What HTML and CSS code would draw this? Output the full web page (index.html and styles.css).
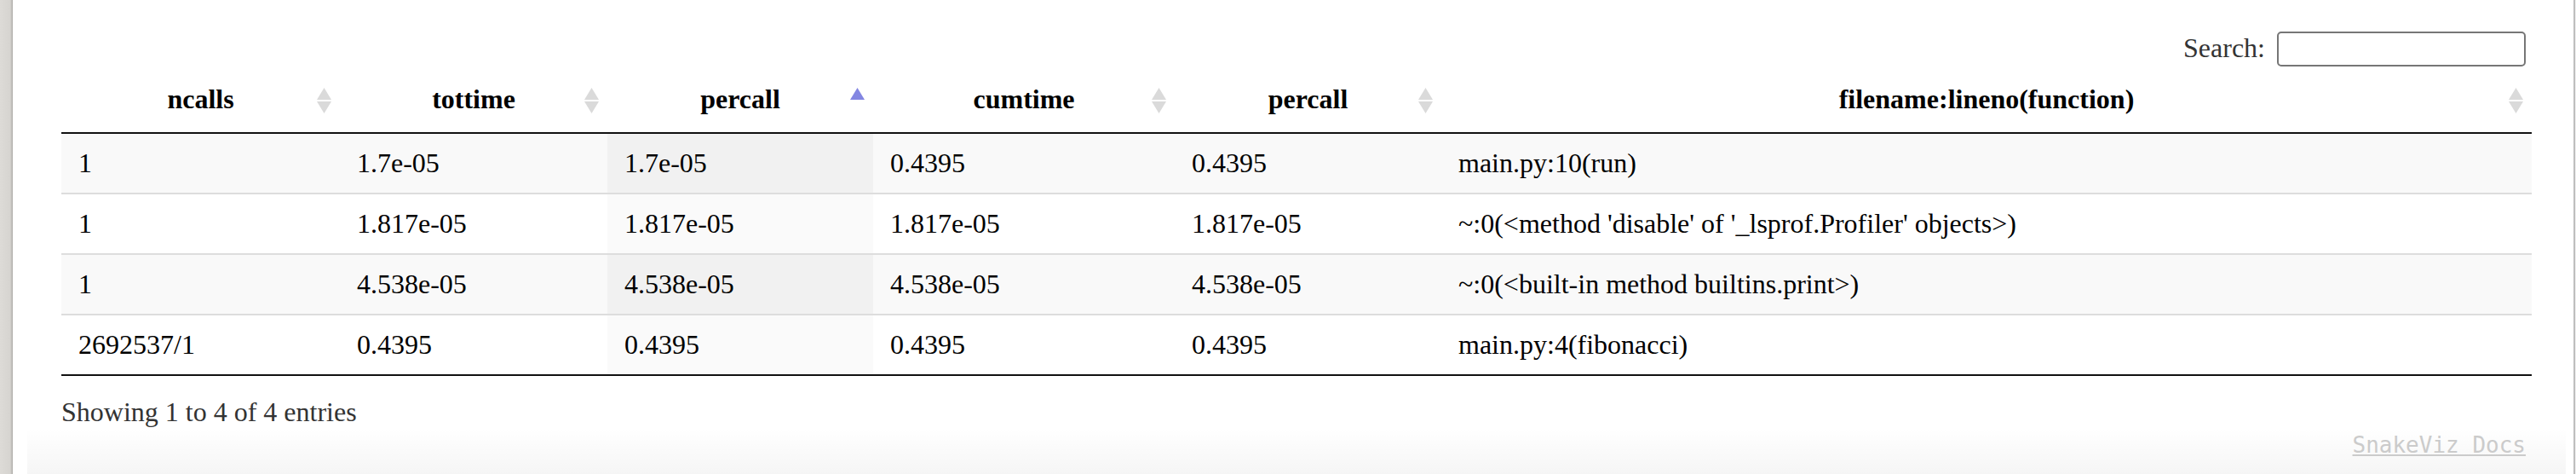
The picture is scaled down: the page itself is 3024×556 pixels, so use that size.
FILE: index.html
```html
<!DOCTYPE html>
<html lang="en">
<head>
<meta charset="utf-8">
<title>SnakeViz</title>
<link rel="stylesheet" href="styles.css">
</head>
<body>
<div class="frame">
  <div class="edge-l"></div>
  <div class="page">
    <div class="filter">
      <label class="filter-label"><span class="filter-text">Search:</span><input class="filter-input" type="search"></label>
    </div>
    <table class="stats">
      <colgroup>
        <col class="c1"><col class="c2"><col class="c3"><col class="c4"><col class="c5"><col class="c6">
      </colgroup>
      <thead>
        <tr>
          <th>ncalls<svg class="sort" viewBox="0 0 17 30"><polygon class="both" points="8.5,0 17,14 0,14"/><polygon class="both" points="0,16 17,16 8.5,30"/></svg></th>
          <th>tottime<svg class="sort" viewBox="0 0 17 30"><polygon class="both" points="8.5,0 17,14 0,14"/><polygon class="both" points="0,16 17,16 8.5,30"/></svg></th>
          <th>percall<svg class="sort" viewBox="0 0 17 30"><polygon class="asc" points="8.5,0 17,14 0,14"/></svg></th>
          <th>cumtime<svg class="sort" viewBox="0 0 17 30"><polygon class="both" points="8.5,0 17,14 0,14"/><polygon class="both" points="0,16 17,16 8.5,30"/></svg></th>
          <th>percall<svg class="sort" viewBox="0 0 17 30"><polygon class="both" points="8.5,0 17,14 0,14"/><polygon class="both" points="0,16 17,16 8.5,30"/></svg></th>
          <th>filename:lineno(function)<svg class="sort" viewBox="0 0 17 30"><polygon class="both" points="8.5,0 17,14 0,14"/><polygon class="both" points="0,16 17,16 8.5,30"/></svg></th>
        </tr>
      </thead>
      <tbody>
        <tr class="odd">
          <td>1</td><td>1.7e-05</td><td class="sorted">1.7e-05</td><td>0.4395</td><td>0.4395</td><td>main.py:10(run)</td>
        </tr>
        <tr class="even">
          <td>1</td><td>1.817e-05</td><td class="sorted">1.817e-05</td><td>1.817e-05</td><td>1.817e-05</td><td>~:0(&lt;method 'disable' of '_lsprof.Profiler' objects&gt;)</td>
        </tr>
        <tr class="odd">
          <td>1</td><td>4.538e-05</td><td class="sorted">4.538e-05</td><td>4.538e-05</td><td>4.538e-05</td><td>~:0(&lt;built-in method builtins.print&gt;)</td>
        </tr>
        <tr class="even">
          <td>2692537/1</td><td>0.4395</td><td class="sorted">0.4395</td><td>0.4395</td><td>0.4395</td><td>main.py:4(fibonacci)</td>
        </tr>
      </tbody>
    </table>
    <div class="info">Showing 1 to 4 of 4 entries</div>
    <div class="footer"><a class="docs" href="#">SnakeViz Docs</a></div>
  </div>
  <div class="edge-r"></div>
</div>
</body>
</html>
```
FILE: styles.css
```css
html, body {
  margin: 0;
  padding: 0;
  height: 556px;
  overflow: hidden;
  background: #fff;
}

body {
  font-family: "Liberation Serif", "Times New Roman", serif;
  font-size: 32px;
  color: #000;
}

.frame {
  display: flex;
  height: 556px;
}

.edge-l {
  flex: none;
  width: 15px;
  background: linear-gradient(to right, #dddbd7 0%, #d6d4d0 80%, #aeaca9 100%);
}

.edge-r {
  flex: none;
  width: 3px;
  background: linear-gradient(to right, #c4c4c4 0%, #b9b9b9 66%, #f0f0f0 67%, #f0f0f0 100%);
}

.page {
  flex: 1;
  display: flex;
  flex-direction: column;
  padding: 0 49px 0 57px;
  min-width: 0;
}

.filter {
  display: flex;
  justify-content: flex-end;
  align-items: center;
  height: 41px;
  padding-top: 37px;
  padding-right: 7px;
  color: #333;
}

.filter-label {
  display: flex;
  align-items: center;
  line-height: normal;
}

.filter-text {
  margin-bottom: 3px;
}

.filter-input {
  box-sizing: border-box;
  width: 292px;
  height: 41px;
  margin: 0 0 0 14px;
  padding: 0 6px;
  border: 2px solid #767676;
  border-radius: 5px;
  background: #fff;
  font-size: 26px;
}

.stats {
  width: 2900px;
  table-layout: fixed;
  border-collapse: separate;
  border-spacing: 0;
  border-bottom: 2px solid #111;
}

.c1 { width: 327px; }
.c2 { width: 314px; }
.c3 { width: 312px; }
.c4 { width: 354px; }
.c5 { width: 313px; }
.c6 { width: 1280px; }

.stats th {
  position: relative;
  padding: 20px 36px;
  font-weight: bold;
  text-align: center;
  border-bottom: 2px solid #111;
  white-space: nowrap;
}

.sort {
  position: absolute;
  right: 10px;
  top: 25px;
  width: 17px;
  height: 30px;
}

.both { fill: #dadada; }
.asc { fill: #8386e2; }

.stats td {
  padding: 16px 20px;
  text-align: left;
  border-top: 2px solid #ddd;
  white-space: nowrap;
}

.stats tbody tr:first-child td {
  border-top: none;
}

.odd td { background: #f9f9f9; }
.odd td.sorted { background: #f1f1f1; }
.even td { background: #fff; }
.even td.sorted { background: #fafafa; }

.info {
  padding-top: 24px;
  color: #333;
}

.footer {
  margin: auto -40px 0;
  padding: 0 47px 18px 0;
  text-align: right;
  background: linear-gradient(to bottom, rgba(0, 0, 0, 0) 0%, rgba(0, 0, 0, 0.01) 30%, rgba(0, 0, 0, 0.04) 100%);
}

.docs {
  font-family: "DejaVu Sans Mono", monospace;
  font-size: 26px;
  color: #cbcbcb;
  text-decoration: underline;
}
```
